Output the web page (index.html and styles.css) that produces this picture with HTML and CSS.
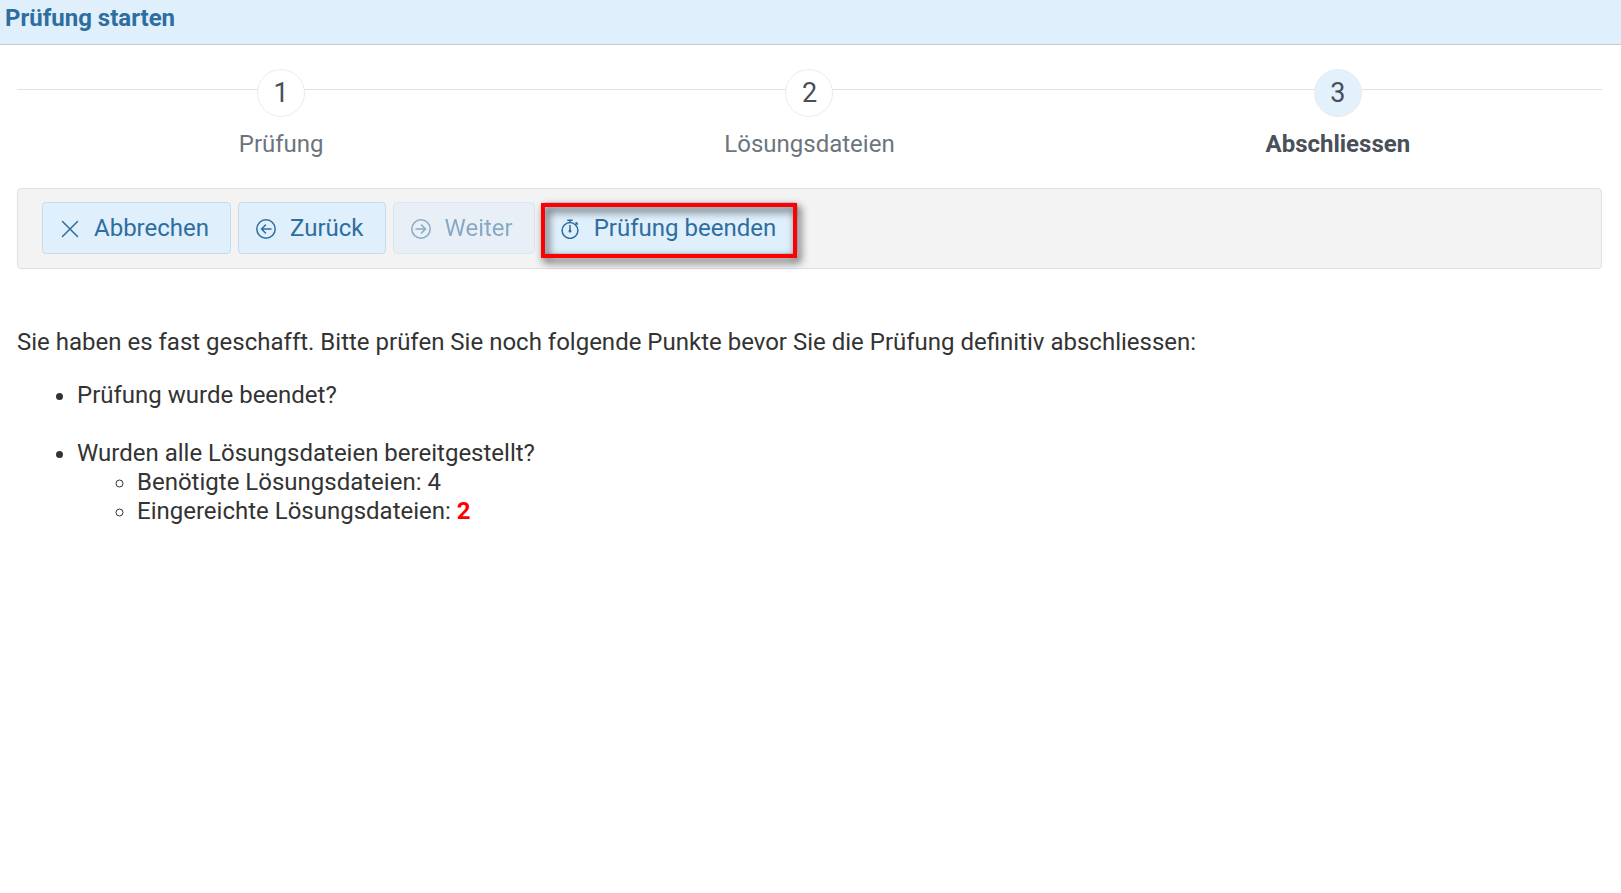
FILE: index.html
```html
<!DOCTYPE html>
<html lang="de">
<head>
<meta charset="utf-8">
<title>Prüfung starten</title>
<link rel="stylesheet" href="styles.css">
</head>
<body>
<header class="titlebar"><h1 class="title">Prüfung starten</h1></header>
<main class="content">
  <ol class="steps">
    <li class="step"><span class="step-number">1</span><span class="step-label">Prüfung</span></li>
    <li class="step"><span class="step-number">2</span><span class="step-label">Lösungsdateien</span></li>
    <li class="step step-active" aria-current="step"><span class="step-number">3</span><span class="step-label">Abschliessen</span></li>
  </ol>
  <div class="toolbar" role="toolbar">
    <button class="button" type="button">
      <svg class="icon" viewBox="0 0 20 20" aria-hidden="true"><path d="M2.500 2.500l15 15M17.500 2.500l-15 15"/></svg>
      <span>Abbrechen</span>
    </button>
    <button class="button" type="button">
      <svg class="icon" viewBox="0 0 20 20" aria-hidden="true"><circle cx="10" cy="10" r="9.200"/><path d="M15 10H5.500M9.500 6l-4 4 4 4"/></svg>
      <span>Zurück</span>
    </button>
    <button class="button" type="button" disabled>
      <svg class="icon" viewBox="0 0 20 20" aria-hidden="true"><circle cx="10" cy="10" r="9.200"/><path d="M5 10h9.500M10.500 6l4 4-4 4"/></svg>
      <span>Weiter</span>
    </button>
    <div class="highlighted">
      <button class="button" type="button">
        <svg class="icon" viewBox="0 0 20 20" aria-hidden="true"><circle cx="10" cy="11.500" r="7.900"/><path d="M7.800 1.200h4.400M10 1.200v2.300M15.600 5.500l1.200-1.200M16.100 3.600l1.400 1.400M10 6.500v6"/><circle class="icon-hub" cx="10" cy="12" r="1.500"/></svg>
        <span>Prüfung beenden</span>
      </button>
    </div>
  </div>
  <section class="message">
    <p class="intro">Sie haben es fast geschafft. Bitte prüfen Sie noch folgende Punkte bevor Sie die Prüfung definitiv abschliessen:</p>
    <ul class="checklist">
      <li>Prüfung wurde beendet?</li>
      <li>Wurden alle Lösungsdateien bereitgestellt?
        <ul class="details">
          <li>Benötigte Lösungsdateien: 4</li>
          <li>Eingereichte Lösungsdateien: <strong class="missing">2</strong></li>
        </ul>
      </li>
    </ul>
  </section>
</main>
</body>
</html>
```
FILE: styles.css
```css
* { box-sizing: border-box; }
body {
  margin: 0;
  background: #fff;
  color: #333;
  font: 24px/29px Roboto, "Liberation Sans", sans-serif;
}
.titlebar {
  padding: 4px 5px 11px;
  background: #dfeffc;
  border-bottom: 1px solid #c5c9cd;
}
.title {
  margin: 0;
  color: #2e6e9e;
  font-size: 24px;
  line-height: 29px;
  font-weight: 700;
}
.content { padding: 24px 19px 24px 17px; }
.steps {
  display: flex;
  margin: 0;
  padding: 0;
  list-style: none;
  background: linear-gradient(#dee2e6, #dee2e6) 0 20px / 100% 1px no-repeat;
}
.step {
  flex: 1;
  display: flex;
  flex-direction: column;
  align-items: center;
  gap: 13px;
  color: #6c757d;
}
.step-number {
  display: flex;
  align-items: center;
  justify-content: center;
  width: 48px;
  height: 48px;
  padding-top: 1px;
  border: 1px solid #e9ecef;
  border-radius: 50%;
  background: #fff;
  color: #495057;
  font-size: 27px;
}
.step-active { color: #495057; font-weight: 700; }
.step-active .step-number { background: #e3f1fd; font-weight: 400; }
.toolbar {
  display: flex;
  gap: 7px;
  margin-top: 29px;
  padding: 13px 24px 14px;
  background: #f3f3f3;
  border: 1px solid #dee2e6;
  border-radius: 4px;
}
.button {
  display: flex;
  align-items: center;
  gap: 14px;
  height: 52px;
  padding: 1px 21px 0 17px;
  border: 1px solid #c5dbec;
  border-radius: 4px;
  background: #dfeffc;
  color: #2e6e9e;
  font: inherit;
}
.button:disabled { opacity: 0.55; background: #e0edfc; }
.icon {
  width: 20px;
  height: 20px;
  fill: none;
  stroke: currentColor;
  stroke-width: 1.5;
  stroke-linecap: round;
  stroke-linejoin: round;
}
.icon-hub { fill: currentColor; stroke: none; }
.highlighted { position: relative; }
.highlighted::after {
  content: "";
  position: absolute;
  inset: 1px 1px -4px -1px;
  border: 4px solid #f00;
  filter: drop-shadow(3px 4px 4px rgba(0, 0, 0, 0.8));
  pointer-events: none;
}
.message { margin-top: 59px; }
.intro { margin: 0 0 24px; }
.checklist { margin: 0; padding-left: 60px; }
.checklist > li + li { margin-top: 29px; }
.details { margin: 0; padding-left: 60px; }
.missing { color: #f00; }
```
